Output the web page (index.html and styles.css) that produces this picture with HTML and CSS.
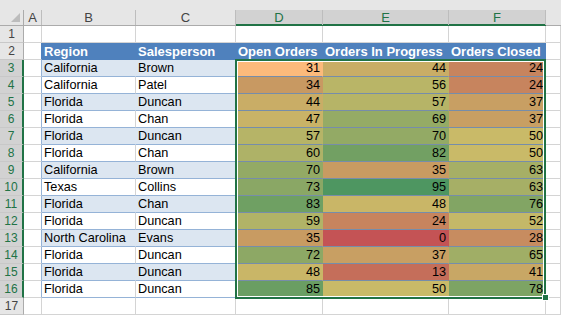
FILE: index.html
```html
<!DOCTYPE html>
<html>
<head>
<meta charset="utf-8">
<link rel="stylesheet" href="styles.css">
</head>
<body>
<div class="sheet">
  <div class="ch"><div class="ch-in corner"><svg width="23" height="15" viewBox="0 0 23 15"><polygon points="20,3 20,12 11,12" fill="#BCBCBC"/></svg></div></div>
  <div class="ch"><div class="ch-in">A</div></div>
  <div class="ch"><div class="ch-in">B</div></div>
  <div class="ch"><div class="ch-in">C</div></div>
  <div class="ch sel"><div class="ch-in">D</div></div>
  <div class="ch sel"><div class="ch-in">E</div></div>
  <div class="ch sel"><div class="ch-in">F</div></div>
  <div class="ch"><div class="ch-in last"></div></div>

  <div class="rh">1</div><div class="c"></div><div class="c"></div><div class="c"></div><div class="c"></div><div class="c"></div><div class="c"></div><div class="c"></div>

  <div class="rh">2</div><div class="c tlh"></div><div class="c th">Region</div><div class="c th">Salesperson</div><div class="c th">Open Orders</div><div class="c th">Orders In Progress</div><div class="c th">Orders Closed</div><div class="c"></div>

  <div class="rh sel">3</div><div class="c tl"></div><div class="c band">California</div><div class="c band">Brown</div><div class="c cf num" style="background:#FCBA7B">31</div><div class="c cf num" style="background:#C9AD66">44</div><div class="c cf num" style="background:#C7845E">24</div><div class="c"></div>
  <div class="rh sel">4</div><div class="c tl"></div><div class="c plain">California</div><div class="c plain">Patel</div><div class="c cf num" style="background:#C89962">34</div><div class="c cf num" style="background:#B9B567">56</div><div class="c cf num" style="background:#C7845E">24</div><div class="c"></div>
  <div class="rh sel">5</div><div class="c tl"></div><div class="c band">Florida</div><div class="c band">Duncan</div><div class="c cf num" style="background:#C9AD66">44</div><div class="c cf num" style="background:#B6B467">57</div><div class="c cf num" style="background:#C89F63">37</div><div class="c"></div>
  <div class="rh sel">6</div><div class="c tl"></div><div class="c plain">Florida</div><div class="c plain">Chan</div><div class="c cf num" style="background:#C9B367">47</div><div class="c cf num" style="background:#95AB65">69</div><div class="c cf num" style="background:#C89F63">37</div><div class="c"></div>
  <div class="rh sel">7</div><div class="c tl"></div><div class="c band">Florida</div><div class="c band">Duncan</div><div class="c cf num" style="background:#B6B467">57</div><div class="c cf num" style="background:#93AA65">70</div><div class="c cf num" style="background:#C9BA68">50</div><div class="c"></div>
  <div class="rh sel">8</div><div class="c tl"></div><div class="c plain">Florida</div><div class="c plain">Chan</div><div class="c cf num" style="background:#AEB267">60</div><div class="c cf num" style="background:#72A063">82</div><div class="c cf num" style="background:#C9BA68">50</div><div class="c"></div>
  <div class="rh sel">9</div><div class="c tl"></div><div class="c band">California</div><div class="c band">Brown</div><div class="c cf num" style="background:#93AA65">70</div><div class="c cf num" style="background:#C89B62">35</div><div class="c cf num" style="background:#A6AF66">63</div><div class="c"></div>
  <div class="rh sel">10</div><div class="c tl"></div><div class="c plain">Texas</div><div class="c plain">Collins</div><div class="c cf num" style="background:#8AA765">73</div><div class="c cf num" style="background:#4E9661">95</div><div class="c cf num" style="background:#A6AF66">63</div><div class="c"></div>
  <div class="rh sel">11</div><div class="c tl"></div><div class="c band">Florida</div><div class="c band">Chan</div><div class="c cf num" style="background:#6FA063">83</div><div class="c cf num" style="background:#C9B667">48</div><div class="c cf num" style="background:#82A564">76</div><div class="c"></div>
  <div class="rh sel">12</div><div class="c tl"></div><div class="c plain">Florida</div><div class="c plain">Duncan</div><div class="c cf num" style="background:#B1B367">59</div><div class="c cf num" style="background:#C7845E">24</div><div class="c cf num" style="background:#C4B868">52</div><div class="c"></div>
  <div class="rh sel">13</div><div class="c tl"></div><div class="c band">North Carolina</div><div class="c band">Evans</div><div class="c cf num" style="background:#C89B62">35</div><div class="c cf num" style="background:#C45355">0</div><div class="c cf num" style="background:#C78C60">28</div><div class="c"></div>
  <div class="rh sel">14</div><div class="c tl"></div><div class="c plain">Florida</div><div class="c plain">Duncan</div><div class="c cf num" style="background:#8DA865">72</div><div class="c cf num" style="background:#C89F63">37</div><div class="c cf num" style="background:#A0AE66">65</div><div class="c"></div>
  <div class="rh sel">15</div><div class="c tl"></div><div class="c band">Florida</div><div class="c band">Duncan</div><div class="c cf num" style="background:#C9B667">48</div><div class="c cf num" style="background:#C56E5A">13</div><div class="c cf num" style="background:#C8A765">41</div><div class="c"></div>
  <div class="rh sel">16</div><div class="c tl"></div><div class="c plain">Florida</div><div class="c plain">Duncan</div><div class="c cf num" style="background:#6A9E63">85</div><div class="c cf num" style="background:#C9BA68">50</div><div class="c cf num" style="background:#7DA464">78</div><div class="c"></div>

  <div class="rh">17</div><div class="c"></div><div class="c"></div><div class="c"></div><div class="c"></div><div class="c"></div><div class="c"></div><div class="c"></div>

  <div class="selection"></div>
  <div class="handle"></div>
</div>
</body>
</html>
```

FILE: styles.css
```css
body {
  margin: 0;
  background: #ffffff;
  overflow: hidden;
  font-family: "Liberation Sans", Arial, sans-serif;
}

.sheet {
  position: relative;
  display: grid;
  grid-template-columns: 24px 18px 94px 100px 87px 126px 97px 15px;
  grid-template-rows: 26px repeat(17, 17px);
  width: 561px;
}

.ch {
  background: #e6e6e6;
  padding-top: 10px;
  border-bottom: 1px solid #ababab;
  box-sizing: border-box;
}

.ch-in {
  height: 15px;
  border-right: 1px solid #bdbdbd;
  box-sizing: border-box;
  text-align: center;
  font-size: 13px;
  line-height: 15px;
  color: #444444;
}

.ch-in.corner {
  border-right-color: #ababab;
  display: flex;
}

.ch-in.last {
  border-right: none;
}

.ch.sel {
  border-bottom-color: #217346;
}

.ch.sel .ch-in {
  background: #d2d2d2;
  color: #217346;
  box-shadow: inset 0 -1px 0 #217346;
}

.rh {
  background: #e6e6e6;
  border-right: 1px solid #ababab;
  border-bottom: 1px solid #c8c8c8;
  box-sizing: border-box;
  text-align: center;
  font-size: 12px;
  line-height: 16px;
  color: #444444;
}

.rh.sel {
  background: #d2d2d2;
  color: #217346;
  border-right: 2px solid #217346;
}

.c {
  border-right: 1px solid #d4d4d4;
  border-bottom: 1px solid #d4d4d4;
  box-sizing: border-box;
  font-size: 12.7px;
  line-height: 17px;
  padding: 0 2px;
  white-space: nowrap;
  overflow: hidden;
  color: #000000;
}

.num {
  text-align: right;
}

.tlh {
  border-right-color: #4f81bd;
}

.tl {
  border-right-color: #95b3d7;
}

.th {
  background: #4f81bd;
  color: #ffffff;
  font-weight: bold;
  font-size: 13px;
  border-right-color: transparent;
  border-bottom-color: transparent;
}

.band {
  background: #dce6f1;
  border-right-color: transparent;
  border-bottom-color: #95b3d7;
}

.plain {
  border-bottom-color: #95b3d7;
}

.cf {
  border-right-color: transparent;
  border-bottom-color: #768daa;
}

.selection {
  position: absolute;
  left: 235px;
  top: 59px;
  width: 311px;
  height: 240px;
  box-sizing: border-box;
  border: 2px solid #217346;
  box-shadow: inset 0 0 0 1px #ffffff;
  pointer-events: none;
}

.handle {
  position: absolute;
  left: 542px;
  top: 294px;
  width: 7px;
  height: 7px;
  box-sizing: border-box;
  background: #217346;
  border: 1px solid #ffffff;
}
```
